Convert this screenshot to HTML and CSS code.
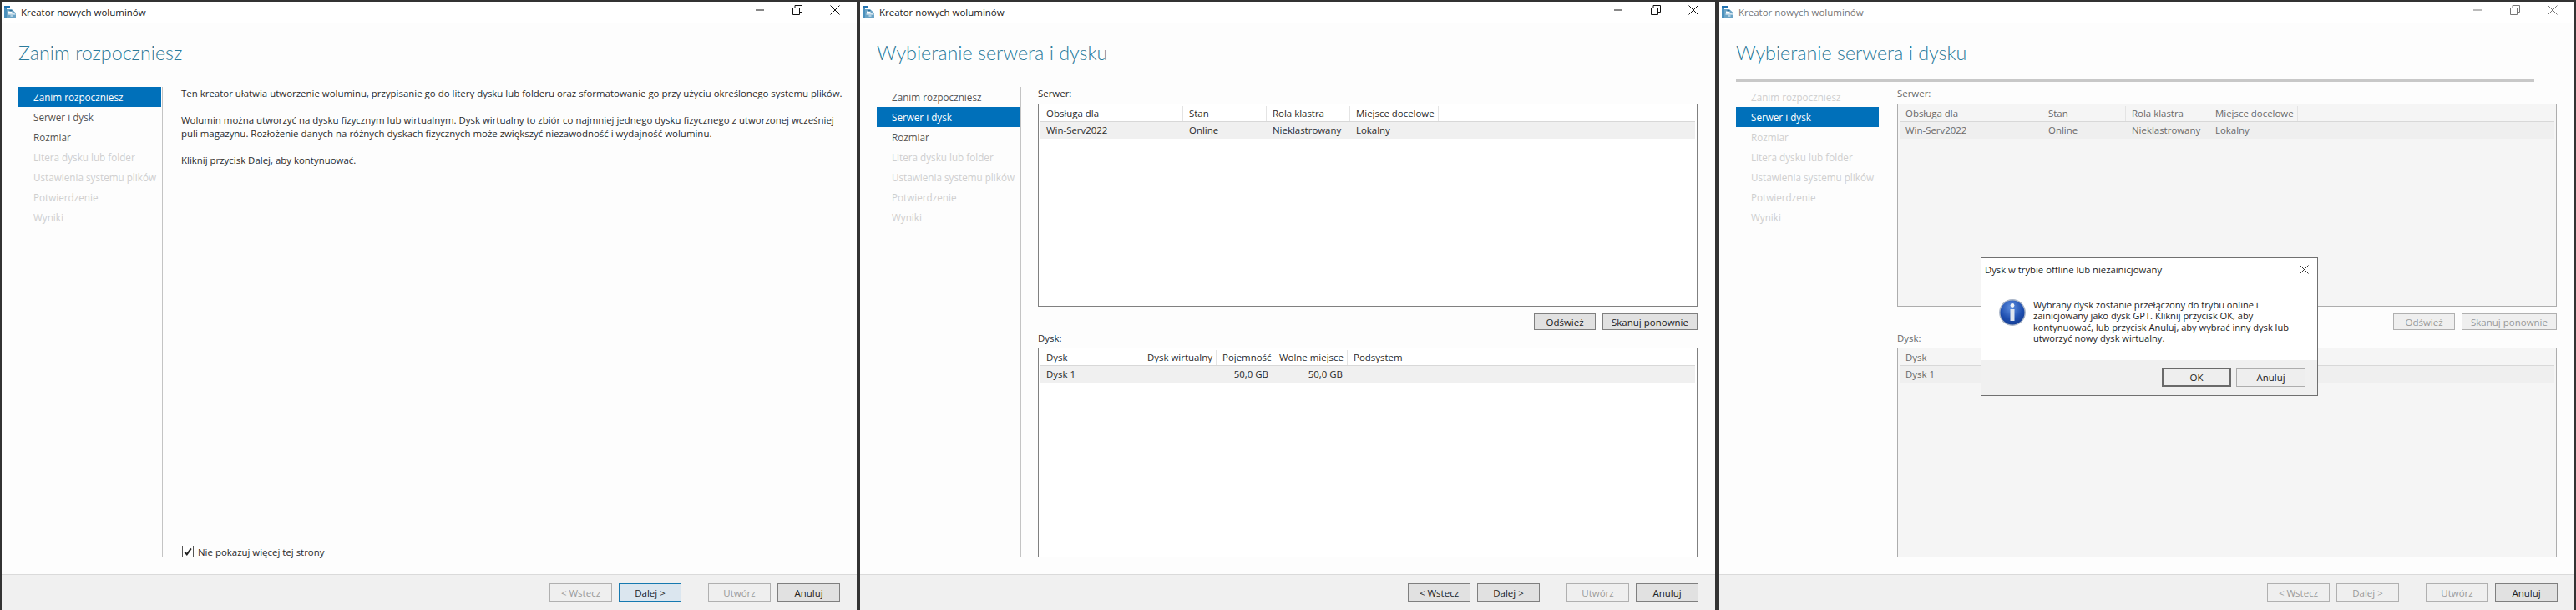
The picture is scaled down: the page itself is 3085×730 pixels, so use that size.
FILE: index.html
```html
<!DOCTYPE html>
<html lang="pl">
<head>
<meta charset="utf-8">
<title>Kreator nowych woluminów</title>
<link rel="stylesheet" href="styles.css">
</head>
<body>
<svg class="defs" width="0" height="0" aria-hidden="true">
  <defs>
    <symbol id="app" viewBox="0 0 14 14">
      <path d="M0 0h7v3H0z" fill="#1e70b0"/>
      <path d="M0 3h3v11H0z" fill="#4a90bd"/>
      <path d="M3 4h6l5 4.500V14H3z" fill="#6ba4c6"/>
      <path d="M5 6.500h4.500v1.500h3v1.500H5z" fill="#fff"/>
      <path d="M4.500 9.500h9v1H4.500zM7.500 11.500h3v1h-3z" fill="#f4f8fb"/>
      <path d="M6.500 5h3v1.500h-3z" fill="#2f6f98"/>
    </symbol>
    <symbol id="min" viewBox="0 0 12 12"><path d="M1 6h10" stroke="currentColor" fill="none"/></symbol>
    <symbol id="restore" viewBox="0 0 12 12"><path d="M.5 3.500h8v8h-8zM3 3.500V.5h8.500v8H8.500" stroke="currentColor" fill="none"/></symbol>
    <symbol id="close" viewBox="0 0 12 12"><path d="M.5.500l11 11M11.500.500l-11 11" stroke="currentColor" fill="none"/></symbol>
  </defs>
</svg>

<section class="win">
  <header class="titlebar">
    <svg class="app-icon"><use href="#app"/></svg>
    <span class="titlebar-text">Kreator nowych woluminów</span>
    <div class="caption">
      <svg class="cap-icon"><use href="#min"/></svg>
      <svg class="cap-icon"><use href="#restore"/></svg>
      <svg class="cap-icon"><use href="#close"/></svg>
    </div>
  </header>
  <h1 class="heading">Zanim rozpoczniesz</h1>
  <div class="main">
    <nav class="nav">
      <div class="nav-item nav-item--on">Zanim rozpoczniesz</div>
      <div class="nav-item nav-item--done">Serwer i dysk</div>
      <div class="nav-item nav-item--done">Rozmiar</div>
      <div class="nav-item">Litera dysku lub folder</div>
      <div class="nav-item">Ustawienia systemu plików</div>
      <div class="nav-item">Potwierdzenie</div>
      <div class="nav-item">Wyniki</div>
    </nav>
    <div class="content content--intro">
      <div class="intro">
        <p class="para">Ten kreator ułatwia utworzenie woluminu, przypisanie go do litery dysku lub folderu oraz sformatowanie go przy użyciu określonego systemu plików.</p>
        <p class="para">Wolumin można utworzyć na dysku fizycznym lub wirtualnym. Dysk wirtualny to zbiór co najmniej jednego dysku fizycznego z utworzonej wcześniej<br>puli magazynu. Rozłożenie danych na różnych dyskach fizycznych może zwiększyć niezawodność i wydajność woluminu.</p>
        <p class="para">Kliknij przycisk Dalej, aby kontynuować.</p>
      </div>
      <label class="check">
        <svg class="check-box" viewBox="0 0 14 14"><rect x=".5" y=".5" width="13" height="13" fill="#fff" stroke="#555"/><path d="M3.200 7.300l2.600 3 5-7" fill="none" stroke="#222" stroke-width="2"/></svg>
        <span>Nie pokazuj więcej tej strony</span>
      </label>
    </div>
  </div>
  <footer class="footer">
    <button class="btn btn--off">&lt; Wstecz</button>
    <button class="btn btn--focus">Dalej &gt;</button>
    <button class="btn btn--off btn--gap">Utwórz</button>
    <button class="btn btn--main">Anuluj</button>
  </footer>
</section>

<section class="win">
  <header class="titlebar">
    <svg class="app-icon"><use href="#app"/></svg>
    <span class="titlebar-text">Kreator nowych woluminów</span>
    <div class="caption">
      <svg class="cap-icon"><use href="#min"/></svg>
      <svg class="cap-icon"><use href="#restore"/></svg>
      <svg class="cap-icon"><use href="#close"/></svg>
    </div>
  </header>
  <h1 class="heading">Wybieranie serwera i dysku</h1>
  <div class="main">
    <nav class="nav">
      <div class="nav-item nav-item--done">Zanim rozpoczniesz</div>
      <div class="nav-item nav-item--on">Serwer i dysk</div>
      <div class="nav-item nav-item--done">Rozmiar</div>
      <div class="nav-item">Litera dysku lub folder</div>
      <div class="nav-item">Ustawienia systemu plików</div>
      <div class="nav-item">Potwierdzenie</div>
      <div class="nav-item">Wyniki</div>
    </nav>
    <div class="content">
      <div class="label">Serwer:</div>
      <div class="list list--server">
        <div class="list-row list-head cols-server">
          <div class="cell">Obsługa dla</div><div class="cell">Stan</div><div class="cell">Rola klastra</div><div class="cell">Miejsce docelowe</div>
        </div>
        <div class="list-row list-item cols-server">
          <div class="cell">Win-Serv2022</div><div class="cell">Online</div><div class="cell">Nieklastrowany</div><div class="cell">Lokalny</div>
        </div>
      </div>
      <div class="list-actions">
        <button class="btn btn--small">Odśwież</button>
        <button class="btn btn--wide">Skanuj ponownie</button>
      </div>
      <div class="label label--disk">Dysk:</div>
      <div class="list list--disk">
        <div class="list-row list-head cols-disk">
          <div class="cell">Dysk</div><div class="cell">Dysk wirtualny</div><div class="cell">Pojemność</div><div class="cell">Wolne miejsce</div><div class="cell">Podsystem</div>
        </div>
        <div class="list-row list-item cols-disk">
          <div class="cell">Dysk 1</div><div class="cell"></div><div class="cell cell--num">50,0 GB</div><div class="cell cell--num">50,0 GB</div><div class="cell"></div>
        </div>
      </div>
    </div>
  </div>
  <footer class="footer">
    <button class="btn btn--main">&lt; Wstecz</button>
    <button class="btn btn--main">Dalej &gt;</button>
    <button class="btn btn--off btn--gap">Utwórz</button>
    <button class="btn btn--main">Anuluj</button>
  </footer>
</section>

<section class="win win--dim">
  <header class="titlebar">
    <svg class="app-icon"><use href="#app"/></svg>
    <span class="titlebar-text">Kreator nowych woluminów</span>
    <div class="caption">
      <svg class="cap-icon"><use href="#min"/></svg>
      <svg class="cap-icon"><use href="#restore"/></svg>
      <svg class="cap-icon"><use href="#close"/></svg>
    </div>
  </header>
  <h1 class="heading">Wybieranie serwera i dysku</h1>
  <div class="progress"></div>
  <div class="main">
    <nav class="nav">
      <div class="nav-item">Zanim rozpoczniesz</div>
      <div class="nav-item nav-item--on">Serwer i dysk</div>
      <div class="nav-item">Rozmiar</div>
      <div class="nav-item">Litera dysku lub folder</div>
      <div class="nav-item">Ustawienia systemu plików</div>
      <div class="nav-item">Potwierdzenie</div>
      <div class="nav-item">Wyniki</div>
    </nav>
    <div class="content">
      <div class="label">Serwer:</div>
      <div class="list list--server">
        <div class="list-row list-head cols-server">
          <div class="cell">Obsługa dla</div><div class="cell">Stan</div><div class="cell">Rola klastra</div><div class="cell">Miejsce docelowe</div>
        </div>
        <div class="list-row list-item cols-server">
          <div class="cell">Win-Serv2022</div><div class="cell">Online</div><div class="cell">Nieklastrowany</div><div class="cell">Lokalny</div>
        </div>
      </div>
      <div class="list-actions">
        <button class="btn btn--off btn--small">Odśwież</button>
        <button class="btn btn--off btn--wide">Skanuj ponownie</button>
      </div>
      <div class="label label--disk">Dysk:</div>
      <div class="list list--disk">
        <div class="list-row list-head cols-disk">
          <div class="cell">Dysk</div><div class="cell">Dysk wirtualny</div><div class="cell">Pojemność</div><div class="cell">Wolne miejsce</div><div class="cell">Podsystem</div>
        </div>
        <div class="list-row list-item cols-disk">
          <div class="cell">Dysk 1</div><div class="cell"></div><div class="cell cell--num">50,0 GB</div><div class="cell cell--num">50,0 GB</div><div class="cell"></div>
        </div>
      </div>
    </div>
  </div>
  <footer class="footer">
    <button class="btn btn--off">&lt; Wstecz</button>
    <button class="btn btn--off">Dalej &gt;</button>
    <button class="btn btn--off btn--gap">Utwórz</button>
    <button class="btn btn--main">Anuluj</button>
  </footer>

  <div class="dialog" role="dialog">
    <div class="dialog-title">
      <span>Dysk w trybie offline lub niezainicjowany</span>
      <svg class="dialog-close"><use href="#close"/></svg>
    </div>
    <div class="dialog-body">
      <svg class="info" viewBox="0 0 32 32">
        <defs>
          <radialGradient id="infoFill" cx="45%" cy="30%" r="75%">
            <stop offset="0" stop-color="#5f8fe0"/>
            <stop offset=".6" stop-color="#1f4fb0"/>
            <stop offset="1" stop-color="#123a8e"/>
          </radialGradient>
        </defs>
        <circle cx="16" cy="16" r="15.200" fill="url(#infoFill)" stroke="#a9b4c6" stroke-width="1.400"/>
        <circle cx="16" cy="7.500" r="2.400" fill="#f0f3f8"/>
        <path d="M13.500 12h5v14h-5z" fill="#dfe5ee"/>
      </svg>
      <p class="dialog-text">Wybrany dysk zostanie przełączony do trybu online i<br>zainicjowany jako dysk GPT. Kliknij przycisk OK, aby<br>kontynuować, lub przycisk Anuluj, aby wybrać inny dysk lub<br>utworzyć nowy dysk wirtualny.</p>
    </div>
    <div class="dialog-footer">
      <button class="btn btn--dlg btn--default">OK</button>
      <button class="btn btn--dlg">Anuluj</button>
    </div>
  </div>
</section>
</body>
</html>
```

FILE: styles.css
```css
* { box-sizing: border-box; }

html, body { margin: 0; height: 100%; }

body {
  display: flex;
  gap: 5px;
  padding: 2px 2px 0;
  background: #333;
  overflow: hidden;
  font-family: "Open Sans", "Noto Sans", sans-serif;
  font-size: 11.450px;
  color: #2b2b2b;
}

.defs { position: absolute; }

.win {
  position: relative;
  flex: 0 0 1024px;
  height: 728px;
  display: flex;
  flex-direction: column;
  background: #fdfdfd;
}

.win:first-of-type { margin-right: -1px; }

.titlebar {
  flex: none;
  height: 26px;
  display: flex;
  align-items: center;
  padding: 0 20px 2px 3px;
  background: #fff;
}

.app-icon { width: 14px; height: 14px; margin-right: 6px; }

.titlebar-text { font-size: 11.500px; color: #222; }

.caption { margin: 0 0 4px auto; display: flex; gap: 33px; color: #111; }

.cap-icon { width: 12px; height: 12px; }

.heading {
  flex: none;
  margin: 0;
  height: 64px;
  padding: 18px 0 0 20px;
  font-family: Lato, "Open Sans", sans-serif;
  font-size: 23.300px;
  line-height: 34px;
  font-weight: 300;
  color: #2c7b9b;
}

.progress {
  position: absolute;
  left: 20px;
  top: 92px;
  width: 956px;
  height: 4px;
  background: #c8c8c8;
}

.main {
  flex: none;
  height: 563px;
  margin-top: 12px;
  display: flex;
}

.nav {
  flex: none;
  width: 173px;
  margin-left: 20px;
  padding-right: 1px;
  border-right: 1px solid #c4c4c4;
}

.nav-item {
  height: 24px;
  line-height: 24px;
  padding-left: 18px;
  font-size: 11.700px;
  color: #cfcfcf;
  white-space: nowrap;
}

.nav-item--done { color: #555; }

.nav-item--on { background: #0070ba; color: #fff; }

.content {
  flex: none;
  width: 790px;
  margin-left: 20px;
  display: flex;
  flex-direction: column;
}

.content--intro { justify-content: space-between; }

.intro { padding-left: 2px; }

.para {
  margin: 0 0 16px;
  line-height: 16px;
  white-space: nowrap;
}

.check {
  display: flex;
  align-items: center;
  gap: 5px;
  height: 14px;
  margin: 0 0 0 3px;
}

.check-box { width: 14px; height: 14px; }

.label { flex: none; height: 20px; line-height: 16px; }

.label--disk { height: 21px; line-height: 20px; }

.list {
  flex: none;
  padding: 2px;
  border: 1px solid #808080;
  background: #fff;
}

.list--server { height: 243px; }

.list--disk { height: 251px; }

.list-row { display: grid; height: 19px; align-items: center; }

.list-head { height: 19px; border-bottom: 1px solid #d8d8d8; }

.list-item { height: 20px; background: #f0f0f0; }

.cols-server { grid-template-columns: 171px 100px 100px 106px 1fr; }

.cols-disk { grid-template-columns: 121px 90px 68px 89px 68px 1fr; }

.cell {
  height: 100%;
  padding: 0 6px 0 7px;
  line-height: 18px;
  white-space: nowrap;
  overflow: hidden;
}

.list-item .cell { line-height: 20px; }

.list-head .cell { border-right: 1px solid #e4e4e4; }

.cell--num { text-align: right; }

.list-actions {
  flex: none;
  height: 28px;
  display: flex;
  justify-content: flex-end;
  align-items: flex-start;
  gap: 8px;
  padding-top: 8px;
}

.btn {
  flex: none;
  width: 75px;
  height: 22px;
  padding: 0;
  border: 1px solid #7f7f7f;
  background: #e1e1e1;
  font-family: inherit;
  font-size: 11.500px;
  color: #222;
}

.btn--off { border-color: #b0b0b0; background: #efefef; color: #9a9a9a; }

.btn--focus { border-color: #1679b0; background: #dbe6ef; }

.btn--gap { margin-left: 24px; }

.btn--main { border-color: #7f7f7f; background: #e1e1e1; color: #222; }

.btn--small { width: 74px; height: 20px; }

.btn--wide { width: 114px; height: 20px; }

.footer {
  flex: none;
  height: 43px;
  margin-top: 20px;
  display: flex;
  gap: 8px;
  align-items: flex-start;
  justify-content: flex-end;
  padding: 10px 20px 0 0;
  background: #f0f0f0;
  border-top: 1px solid #dadada;
}

.win--dim .titlebar-text { color: #777; }

.win--dim .caption { color: #777; }

.win--dim .label,
.win--dim .cell { color: #6a6a6a; }

.win--dim .list { border-color: #adadad; background: #f5f5f5; }

.win--dim .list-item { background: #efefef; }

.dialog {
  position: absolute;
  left: 313px;
  top: 306px;
  width: 404px;
  height: 166px;
  display: flex;
  flex-direction: column;
  border: 1px solid #707070;
  background: #fff;
}

.dialog-title {
  flex: none;
  height: 26px;
  display: flex;
  align-items: center;
  justify-content: space-between;
  padding: 0 10px 0 4px;
  font-size: 11.300px;
  color: #222;
}

.dialog-close { width: 11px; height: 11px; color: #222; }

.dialog-body {
  flex: 1;
  display: flex;
  gap: 9px;
  padding: 23px 0 0 21px;
}

.info { flex: none; width: 32px; height: 32px; }

.dialog-text {
  margin: 0;
  font-size: 11.100px;
  line-height: 13.300px;
  color: #222;
}

.dialog-footer {
  flex: none;
  height: 42px;
  display: flex;
  gap: 6px;
  justify-content: flex-end;
  padding: 9px 14px 0 0;
  background: #f0f0f0;
}

.btn--dlg {
  width: 83px;
  height: 23px;
  border: 1px solid #adadad;
  background: #eeeeee;
  font-size: 11.500px;
}

.btn--default { border: 2px solid #6a6a6a; }
```
